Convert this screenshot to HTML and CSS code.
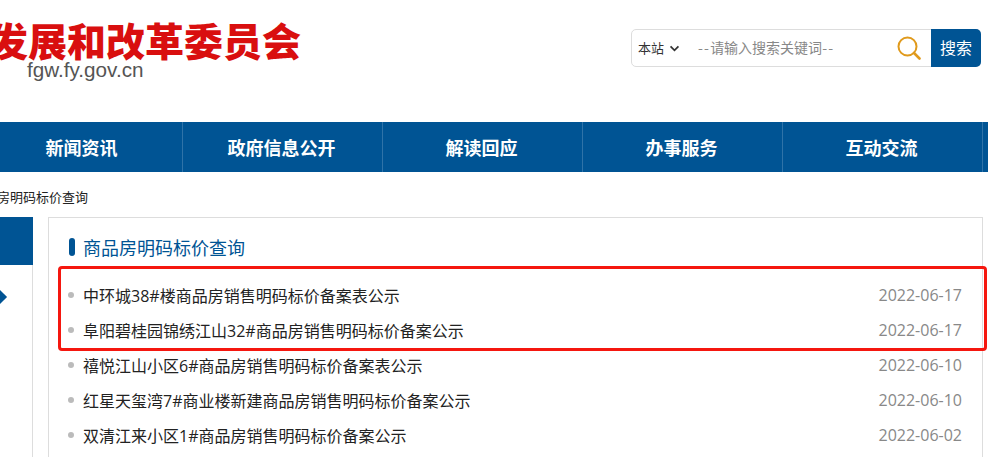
FILE: index.html
```html
<!DOCTYPE html>
<html lang="zh-CN">
<head>
<meta charset="utf-8">
<title>商品房明码标价查询</title>
<link rel="stylesheet" href="styles.css">
</head>
<body>
<header class="header">
  <div class="logo">
    <div class="logo-title">发展和改革委员会</div>
    <div class="logo-url">fgw.fy.gov.cn</div>
  </div>
  <form class="search">
    <span class="scope">本站
      <svg class="chevron" viewBox="0 0 12 8" width="11" height="7"><path d="M1.500 1.500 6 6l4.500-4.500" fill="none" stroke="#333" stroke-width="2"/></svg>
    </span>
    <span class="placeholder"><span class="dash">--</span>请输入搜索关键词<span class="dash">--</span></span>
    <svg class="search-icon" viewBox="0 0 24 24" width="24" height="24"><circle cx="10.500" cy="10.500" r="9" fill="none" stroke="#e09a1c" stroke-width="2"/><path d="M17 17l5.500 5.500" fill="none" stroke="#e09a1c" stroke-width="2.600" stroke-linecap="round"/></svg>
    <span class="search-btn">搜索</span>
  </form>
</header>
<nav class="nav">
  <a class="nav-item">新闻资讯</a>
  <a class="nav-item">政府信息公开</a>
  <a class="nav-item">解读回应</a>
  <a class="nav-item">办事服务</a>
  <a class="nav-item">互动交流</a>
</nav>
<div class="crumb">商品房明码标价查询</div>
<div class="content">
  <aside class="side">
    <div class="side-active"></div>
    <div class="side-item"><span class="diamond"></span></div>
  </aside>
  <main class="panel">
    <h2 class="panel-title">商品房明码标价查询</h2>
    <ul class="list">
      <li class="row"><span class="row-text">中环城38#楼商品房销售明码标价备案表公示</span><span class="row-date">2022-06-17</span></li>
      <li class="row"><span class="row-text">阜阳碧桂园锦绣江山32#商品房销售明码标价备案公示</span><span class="row-date">2022-06-17</span></li>
      <li class="row"><span class="row-text">禧悦江山小区6#商品房销售明码标价备案表公示</span><span class="row-date">2022-06-10</span></li>
      <li class="row"><span class="row-text">红星天玺湾7#商业楼新建商品房销售明码标价备案公示</span><span class="row-date">2022-06-10</span></li>
      <li class="row"><span class="row-text">双清江来小区1#商品房销售明码标价备案公示</span><span class="row-date">2022-06-02</span></li>
    </ul>
  </main>
</div>
<div class="highlight"></div>
</body>
</html>
```
FILE: styles.css
```css
* { box-sizing: border-box; }
html, body { margin: 0; padding: 0; height: 457px; overflow: hidden; background: #fff; }
body { position: relative; width: 988px; font-family: "Noto Sans CJK SC", "Liberation Sans", sans-serif; color: #222; }

.header { height: 122px; display: flex; align-items: flex-start; justify-content: space-between; padding-right: 7px; }
.logo { margin-left: -11px; padding-top: 19px; }
.logo-title { font-size: 39px; line-height: 40px; font-weight: 900; color: #d90f0f; white-space: nowrap; }
.logo-url { margin-left: 38px; margin-top: 1px; font-family: "Liberation Sans", sans-serif; font-size: 20.700px; line-height: 20px; color: #555; }

.search { margin-top: 29px; width: 350px; height: 38px; display: flex; align-items: center; border: 1px solid #ddd; border-radius: 5px; }
.scope { display: flex; align-items: center; gap: 5px; width: 66px; padding-left: 6px; padding-bottom: 2px; font-size: 13px; color: #333; }
.chevron { margin-top: 2px; }
.placeholder { width: 199px; padding-bottom: 2px; font-size: 14px; color: #888; white-space: nowrap; }
.dash { letter-spacing: 1.200px; }
.search-icon { flex: none; }
.search-btn { margin-left: auto; margin-right: -1px; width: 50px; height: 38px; padding-bottom: 2px; display: flex; align-items: center; justify-content: center; background: #005494; color: #fff; font-size: 16px; border-radius: 0 5px 5px 0; }

.nav { height: 50px; display: flex; background: #005494; overflow: hidden; }
.nav-item { flex: none; width: 200px; height: 50px; padding-right: 2px; display: flex; align-items: center; justify-content: center; color: #fff; font-size: 18px; font-weight: 700; border-right: 1px solid #2f73a8; }
.nav-item:first-child { margin-left: -17px; }

.crumb { height: 45px; margin-left: -29px; padding-top: 15px; font-size: 13px; line-height: 20px; color: #222; white-space: nowrap; }

.content { display: flex; align-items: flex-start; height: 240px; }
.side { width: 33px; height: 240px; flex: none; border-right: 1px solid #ddd; }
.side-active { height: 48px; background: #005494; margin-right: -1px; }
.side-item { height: 64px; display: flex; align-items: center; }
.diamond { width: 10px; height: 10px; margin-left: -5px; background: #005494; transform: rotate(45deg); }

.panel { margin-left: 15px; width: 935px; height: 260px; border: 1px solid #ddd; padding: 15px 20px 0 20px; }
.panel-title { margin: 0 0 16px; height: 28px; display: flex; align-items: center; font-size: 18px; font-weight: 400; color: #005494; white-space: nowrap; }
.panel-title::before { content: ""; width: 6px; height: 18px; margin-right: 8px; border-radius: 3px; background: #005494; }

.list { list-style: none; margin: 0; padding: 0; }
.row { height: 35px; display: flex; align-items: center; justify-content: space-between; font-size: 16px; font-family: "Open Sans", "Noto Sans CJK SC", sans-serif; }
.row::before { content: ""; flex: none; width: 6px; height: 6px; margin-left: -1px; margin-right: 9px; border-radius: 50%; background: #bbb; }
.row-text { flex: 1; white-space: nowrap; color: #222; }
.row-date { font-size: 16px; color: #888; }

.highlight { position: absolute; left: 58px; top: 266px; width: 929px; height: 85px; border: 3px solid #f5170f; border-radius: 4px; pointer-events: none; }
```
